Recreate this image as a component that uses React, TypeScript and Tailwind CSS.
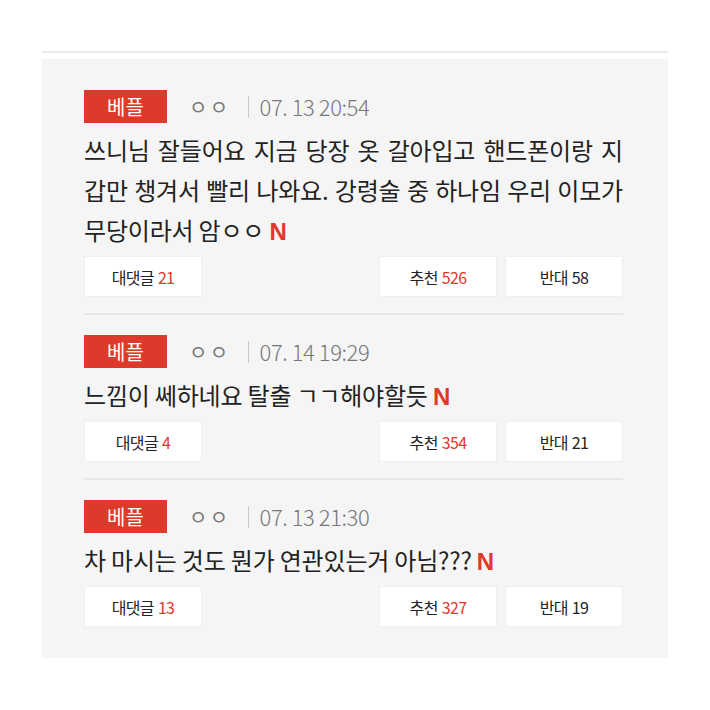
import React from "react";

type Reply = {
  nick: string;
  date: string;
  body: string;
  replies: number;
  up: number;
  down: number;
};

const REPLIES: Reply[] = [
  {
    nick: "ㅇㅇ",
    date: "07. 13 20:54",
    body: "쓰니님 잘들어요 지금 당장 옷 갈아입고 핸드폰이랑 지갑만 챙겨서 빨리 나와요. 강령술 중 하나임 우리 이모가 무당이라서 암ㅇㅇ",
    replies: 21,
    up: 526,
    down: 58,
  },
  {
    nick: "ㅇㅇ",
    date: "07. 14 19:29",
    body: "느낌이 쎄하네요 탈출 ㄱㄱ해야할듯",
    replies: 4,
    up: 354,
    down: 21,
  },
  {
    nick: "ㅇㅇ",
    date: "07. 13 21:30",
    body: "차 마시는 것도 뭔가 연관있는거 아님???",
    replies: 13,
    up: 327,
    down: 19,
  },
];

const font = { fontFamily: '"Noto Sans CJK KR", "Noto Sans", sans-serif' };

const ActionButton = ({ label, count, red }: { label: string; count: number; red?: boolean }) => (
  <button className="flex h-[41px] w-[118px] items-center justify-center gap-1 border border-[#efefef] bg-white text-[16px] tracking-[-0.04em] text-[#222]">
    <span>{label}</span>
    <span className={red ? "text-[#e0392b]" : "text-[#222]"}>{count}</span>
  </button>
);

const ReplyItem = ({ item, last }: { item: Reply; last: boolean }) => (
  <div className={last ? "" : "mb-[20px] border-b-2 border-[#e6e6e6] pb-[16px]"}>
    <div className="flex h-[33px] items-center">
      <span className="flex h-[33px] w-[83px] items-center justify-center bg-[#dd3a2b] text-[20px] text-white">
        베플
      </span>
      <span className="ml-[22px] text-[20px] tracking-[0.12em] text-[#777]">{item.nick}</span>
      <span className="ml-[17px] h-[22px] w-px bg-[#c8c8c8]" />
      <span className="ml-[11px] text-[22px] font-light tracking-[-0.02em] text-[#777]">{item.date}</span>
    </div>
    <p className="mt-[7px] break-all text-justify text-[24px] leading-[40px] tracking-[-0.2px] text-[#222]">
      {item.body}{" "}
      <span
        className="font-bold leading-none text-[#e0392b]"
        style={{ fontFamily: '"Liberation Sans", sans-serif' }}
      >
        N
      </span>
    </p>
    <div className="mt-[6px] flex items-center">
      <ActionButton label="대댓글" count={item.replies} red />
      <div className="ml-auto flex gap-[8px]">
        <ActionButton label="추천" count={item.up} red />
        <ActionButton label="반대" count={item.down} />
      </div>
    </div>
  </div>
);

export default function App() {
  return (
    <div className="min-h-[710px] w-[710px] bg-white pt-[51px]" style={font}>
      <div className="mx-[42px] border-t-2 border-[#ebebeb] pt-[6px]">
        <div className="bg-[#f5f5f5] py-[31px] pl-[42px] pr-[45px]">
          {REPLIES.map((r, i) => (
            <ReplyItem key={i} item={r} last={i === REPLIES.length - 1} />
          ))}
        </div>
      </div>
    </div>
  );
}
